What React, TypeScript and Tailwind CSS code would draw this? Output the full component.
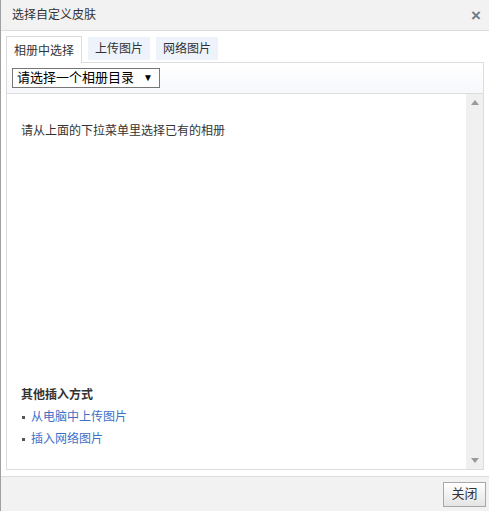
import * as React from 'react';

const font = { fontFamily: '"Liberation Sans", "Noto Sans CJK SC", sans-serif' };

const tabs = ['相册中选择', '上传图片', '网络图片'];

export default function App() {
  return (
    <div
      className="flex h-[511px] w-[489px] flex-col border-l border-[#a0a0a0] bg-[#f2f2f2] text-[12px] leading-[16px] text-[#333]"
      style={font}
    >
      <div className="flex h-[31px] shrink-0 items-center justify-between border-b border-[#dcdcdc] pl-[11px] pr-[8px]">
        <span className="text-[12px] text-[#333]">选择自定义皮肤</span>
        <span className="text-[17px] font-bold leading-none text-[#6f7a8a]">×</span>
      </div>

      <div className="flex flex-1 flex-col bg-white pb-[6px] pl-[5px] pr-[5px] pt-[5px]">
        <div className="flex h-[26px] items-end">
          {tabs.map((t, i) =>
            i === 0 ? (
              <div
                key={t}
                className="relative -mb-px flex h-[27px] items-center border border-b-0 border-[#dcdcdc] bg-white px-[7px] pt-[2px] text-[12px]"
              >
                {t}
              </div>
            ) : (
              <div
                key={t}
                className="ml-[6px] mt-[1px] flex h-[23px] items-center self-start bg-[#eef2fb] px-[7px] text-[12px] text-[#333]"
              >
                {t}
              </div>
            )
          )}
        </div>
        <div className="flex flex-1 flex-col border border-[#dcdcdc]">
          <div className="flex h-[31px] shrink-0 items-center border-b border-[#dcdcdc] bg-gradient-to-b from-white to-[#f7f8fc] px-[5px]">
            <div className="flex h-[20px] w-[148px] items-center justify-between border border-[#767676] bg-white pl-[4px] pr-[6px] text-[13px] text-black">
              <span>请选择一个相册目录</span>
              <span className="text-[10px]">▼</span>
            </div>
          </div>
          <div className="flex flex-1">
            <div className="flex flex-1 flex-col justify-between pb-[22px] pl-[14px] pt-[29px]">
              <p>请从上面的下拉菜单里选择已有的相册</p>
              <div>
                <p className="mb-[6px] font-bold">其他插入方式</p>
                <ul className="space-y-[6px]">
                  {['从电脑中上传图片', '插入网络图片'].map(l => (
                    <li key={l} className="flex items-center">
                      <span className="mr-[6px] ml-[1px] inline-block h-[3px] w-[3px] bg-[#555]" />
                      <span className="text-[#3f6fc6]">{l}</span>
                    </li>
                  ))}
                </ul>
              </div>
            </div>
            <div className="flex w-[17px] flex-col items-center justify-between bg-[#f0f0f0] py-[6px]">
              <svg width="8" height="5" viewBox="0 0 8 5">
                <path d="M4 0 L8 5 L0 5 Z" fill="#9a9a9a" />
              </svg>
              <svg width="8" height="5" viewBox="0 0 8 5">
                <path d="M0 0 L8 0 L4 5 Z" fill="#9a9a9a" />
              </svg>
            </div>
          </div>
        </div>
      </div>

      <div className="flex h-[35px] shrink-0 items-center justify-end border-t border-[#dcdcdc] pr-[3px]">
        <button className="h-[25px] w-[43px] border border-[#a8a8a8] bg-gradient-to-b from-white to-[#e4e4e4] text-[13px] text-[#333]">
          关闭
        </button>
      </div>
    </div>
  );
}
